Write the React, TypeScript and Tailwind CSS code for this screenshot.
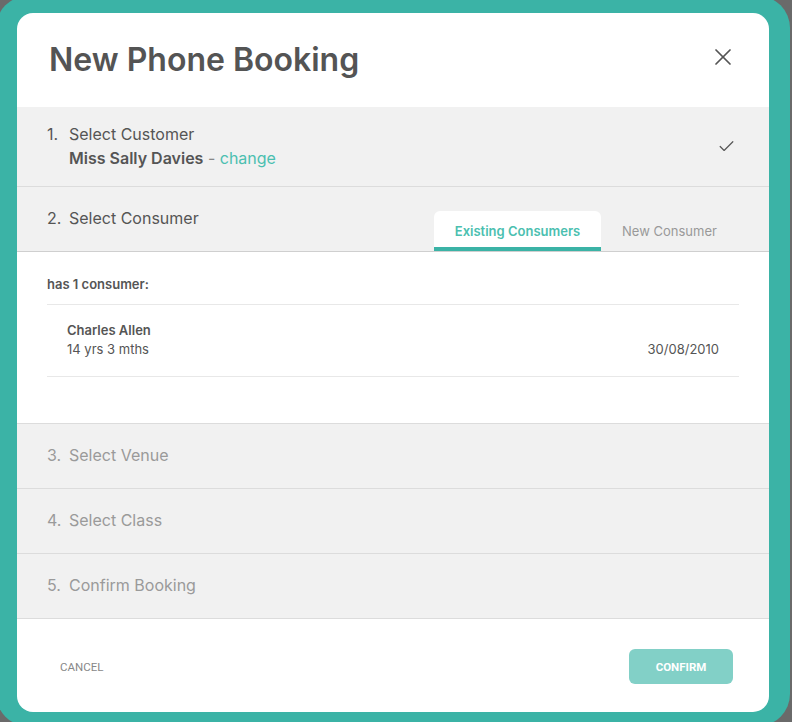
import { X, Check } from "lucide-react";

const steps = [
    { n: 3, label: "Select Venue" },
    { n: 4, label: "Select Class" },
    { n: 5, label: "Confirm Booking" },
];

export default function App() {
    return (
        <div className="w-[792px] h-[722px] overflow-hidden bg-[#6a6a6a]" style={{ fontFamily: "Inter, 'Noto Sans', sans-serif" }}>
            <div className="-ml-[4px] -mt-[4px] w-[794px] h-[730px] rounded-[32px] bg-[#3bb3a6] pl-[21px] pt-[17px]">
                <div className="w-[752px] h-[699px] bg-white rounded-[16px] overflow-hidden flex flex-col">
                    {/* header */}
                    <div className="h-[94px] flex items-center justify-between pl-[32px] pr-[32px] shrink-0">
                        <h1 className="text-[32px] font-semibold text-[#545454]">New Phone Booking</h1>
                        <X className="w-[28px] h-[28px] text-[#555] -mt-[6px]" strokeWidth={1.5} />
                    </div>

                    {/* step 1 */}
                    <div className="h-[80px] bg-[#f1f1f1] border-b border-[#dcdcdc] flex items-center justify-between pl-[30px] pr-[33px] shrink-0">
                        <div className="flex text-[16px] text-[#555] leading-[24px] -mt-[2px]">
                            <span className="w-[22px]">1.</span>
                            <div>
                                <div>Select Customer</div>
                                <div>
                                    <span className="font-semibold text-[#555]">Miss Sally Davies</span>
                                    <span className="text-[#888]"> - </span>
                                    <span className="text-[#4bbfb0]">change</span>
                                </div>
                            </div>
                        </div>
                        <Check className="w-[19px] h-[19px] text-[#555]" strokeWidth={1.5} />
                    </div>

                    {/* step 2 */}
                    <div className="h-[65px] bg-[#f1f1f1] border-b border-[#cfcfcf] flex justify-between pl-[30px] pr-[31px] shrink-0">
                        <div className="flex text-[16px] text-[#555] pt-[19px] leading-[24px]">
                            <span className="w-[22px]">2.</span>
                            <span>Select Consumer</span>
                        </div>
                        <div className="flex items-end text-[13px]">
                            <div className="w-[167px] h-[40px] bg-white rounded-t-[6px] border-b-[4px] border-[#3bb3a6] flex items-center justify-center font-semibold text-[#4bbfb0] pt-[5px]">
                                Existing Consumers
                            </div>
                            <div className="w-[137px] h-[40px] flex items-center justify-center text-[#999] pt-[1px]">
                                New Consumer
                            </div>
                        </div>
                    </div>

                    {/* consumer list */}
                    <div className="h-[171px] bg-white px-[30px] shrink-0">
                        <div className="h-[53px] flex items-end pb-[10px] text-[13px] font-semibold text-[#555] border-b border-[#e8e8e8]">
                            has 1 consumer:
                        </div>
                        <div className="h-[72px] border-b border-[#e8e8e8] flex items-center justify-between pl-[20px] pr-[20px] text-[13px] text-[#555] leading-[19px] pb-[2px]">
                            <div>
                                <div className="font-semibold">Charles Allen</div>
                                <div>14 yrs 3 mths</div>
                            </div>
                            <div className="pt-[19px]">30/08/2010</div>
                        </div>
                    </div>

                    {steps.map((s) => (
                        <div key={s.n} className="h-[65px] bg-[#f1f1f1] border-t border-[#dcdcdc] flex items-center pl-[30px] pb-[3px] text-[16px] text-[#9a9a9a] shrink-0">
                            <span className="w-[22px]">{s.n}.</span>
                            <span>{s.label}</span>
                        </div>
                    ))}

                    {/* footer */}
                    <div className="flex-1 border-t border-[#dcdcdc] flex items-center justify-between pl-[43px] pr-[36px] pt-[2px]" style={{ fontFamily: "Roboto, sans-serif" }}>
                        <button className="text-[11.5px] text-[#888] uppercase pt-[2px]">Cancel</button>
                        <button className="w-[104px] h-[35px] rounded-[6px] bg-[#82d0c7] text-white text-[11.5px] font-bold uppercase pt-[2px]">Confirm</button>
                    </div>
                </div>
            </div>
        </div>
    );
}
